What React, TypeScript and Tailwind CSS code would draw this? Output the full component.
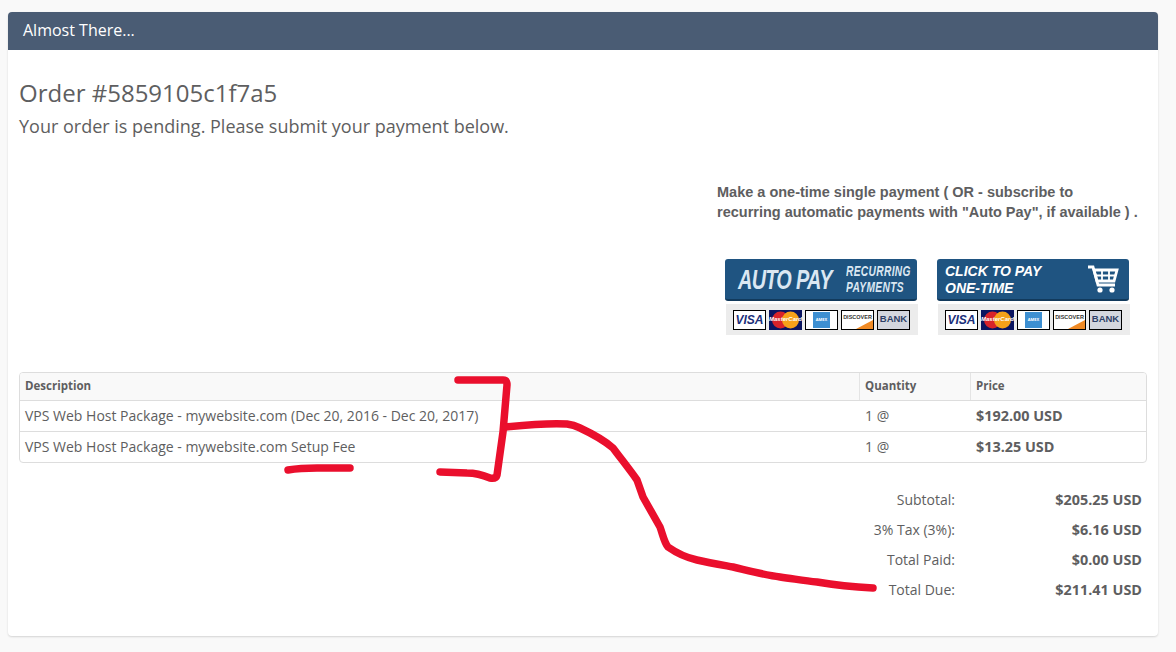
const Logos = () => (
  <div className="flex w-[192px] h-[31px] items-center pl-[7px] gap-[3px] bg-[#ececec]">
    <div className="w-[33px] h-[20px] bg-white border border-black flex items-center justify-center text-[12px] font-bold italic text-[#1a2f7a] font-['Liberation_Sans',sans-serif]">VISA</div>
    <div className="relative w-[33px] h-[20px] bg-[#0b1560] overflow-hidden flex items-center justify-center">
      <svg width="33" height="20" viewBox="0 0 33 20" className="absolute inset-0">
        <circle cx="11.5" cy="10" r="8.5" fill="#d8232a" />
        <circle cx="21.5" cy="10" r="8.5" fill="#f6a11a" />
      </svg>
      <span className="relative text-[6px] font-bold italic text-white font-['Liberation_Sans',sans-serif]">MasterCard</span>
    </div>
    <div className="w-[33px] h-[20px] bg-white border border-black flex items-center justify-center">
      <div className="w-[17px] h-[16px] bg-[#3d8fd1] flex items-center justify-center text-[4px] font-bold text-white">AMEX</div>
    </div>
    <div className="relative w-[33px] h-[20px] bg-white border border-black overflow-hidden flex items-start justify-center pt-[2px]">
      <span className="text-[5.5px] leading-[8px] font-bold text-[#333] font-['Liberation_Sans',sans-serif]">DISCOVER</span>
      <svg width="31" height="18" viewBox="0 0 31 18" className="absolute inset-0">
        <path d="M14 18 L31 9 L31 18 Z" fill="#f08a24" />
      </svg>
    </div>
    <div className="w-[33px] h-[20px] bg-[#d3d6de] border border-black flex items-center justify-center text-[9.5px] font-bold text-[#2c3e66] font-['Liberation_Sans',sans-serif]">BANK</div>
  </div>
);

const Cart = () => (
  <svg width="32" height="32" viewBox="0 0 32 32" fill="none" stroke="#fff" strokeWidth="2.8">
    <path d="M1 4 H6 L11 22 H28" />
    <path d="M7 7 H30 L27 18 H10 Z" />
    <path d="M8.5 12.5 H28.5 M15 7 V18 M22 7 V18" strokeWidth="1.8" />
    <circle cx="13" cy="27" r="2.6" fill="#fff" stroke="none" />
    <circle cx="25" cy="27" r="2.6" fill="#fff" stroke="none" />
  </svg>
);

const TotalRow = ({ label, value }: { label: string; value: string }) => (
  <div className="flex h-[30px] items-center justify-end leading-[20px]">
    <span className="w-[299px] text-right">{label}</span>
    <span className="w-[187px] text-right font-bold text-[14.4px]">{value}</span>
  </div>
);

export default function App() {
  return (
    <div className="relative min-h-[652px] bg-[#f9f9f9] pt-3 px-2 font-['Open_Sans',sans-serif] text-[#5e5e60] overflow-hidden">
      <div className="w-[1150px] h-[624px] bg-white rounded-[4px] shadow-[0_1px_2px_rgba(0,0,0,0.15)]">
        <div className="h-[38px] bg-[#4a5c74] rounded-t-[4px] pl-[15px] pb-[2px] flex items-center text-[16px] text-white">
          Almost There...
        </div>
        <div className="pl-[11px] pr-[11px]">
          <h1 className="mt-[27px] text-[24px] leading-[32px]">Order #5859105c1f7a5</h1>
          <p className="mt-[5px] text-[18px] leading-[24px]">Your order is pending. Please submit your payment below.</p>

          <div className="ml-[698px] mt-[44px] text-[14.5px] leading-[20px] font-bold font-['Liberation_Sans',sans-serif] whitespace-nowrap">
            Make a one-time single payment ( OR - subscribe to
            <br />
            recurring automatic payments with "Auto Pay", if available ) .
          </div>

          <div className="flex ml-[706px] mt-[37px] gap-5">
            <div className="w-[192px]">
              <div className="h-[42px] bg-[#1f5481] rounded-[3px] border-b-2 border-[#123a5c] flex items-center pl-[13px] text-white italic font-bold font-['Liberation_Sans',sans-serif]">
                <span className="pt-[1px] text-[28px] leading-none tracking-[-1px] scale-x-[0.71] origin-left w-[108px] whitespace-nowrap text-[#dbe7f2]">AUTO PAY</span>
                <span className="text-[15px] leading-[16px] tracking-[0.5px] scale-x-[0.68] origin-left whitespace-nowrap text-[#dbe7f2]">
                  RECURRING
                  <br />
                  PAYMENTS
                </span>
              </div>
              <div className="mt-[3px] ml-[1px]"><Logos /></div>
            </div>
            <div className="w-[192px]">
              <div className="h-[42px] bg-[#1f5481] rounded-[3px] border-b-2 border-[#123a5c] flex items-center justify-between pl-[8px] pr-[10px] text-white italic font-bold font-['Liberation_Sans',sans-serif]">
                <span className="pt-[1px] text-[14px] leading-[17px] whitespace-nowrap">
                  CLICK TO PAY
                  <br />
                  ONE-TIME
                </span>
                <Cart />
              </div>
              <div className="mt-[3px] ml-[1px]"><Logos /></div>
            </div>
          </div>

          <div className="mt-[37px] w-[1128px] border border-[#dddddd] rounded-[4px] text-[14px] overflow-hidden">
            <div className="flex h-[28px] bg-[#f9f9f9] border-b border-[#dddddd] text-[11.5px] font-bold items-stretch">
              <div className="w-[839px] pl-[5px] pb-[1px] flex items-center">Description</div>
              <div className="w-[111px] pl-[5px] pb-[1px] border-l border-[#e4e4e4] flex items-center">Quantity</div>
              <div className="flex-1 pl-[5px] pb-[1px] border-l border-[#e4e4e4] flex items-center">Price</div>
            </div>
            <div className="flex h-[31px] border-b border-[#dddddd] items-center leading-[20px]">
              <div className="w-[839px] pl-[5px]">VPS Web Host Package - mywebsite.com (Dec 20, 2016 - Dec 20, 2017)</div>
              <div className="w-[111px] pl-[6px]">1 @</div>
              <div className="flex-1 pl-[6px] font-bold text-[14.4px]">$192.00 USD</div>
            </div>
            <div className="flex h-[30px] items-center leading-[20px]">
              <div className="w-[839px] pl-[5px]">VPS Web Host Package - mywebsite.com Setup Fee</div>
              <div className="w-[111px] pl-[6px]">1 @</div>
              <div className="flex-1 pl-[6px] font-bold text-[14.4px]">$13.25 USD</div>
            </div>
          </div>

          <div className="mt-[22px] w-[1123px] text-[14px]">
            <TotalRow label="Subtotal:" value="$205.25 USD" />
            <TotalRow label="3% Tax (3%):" value="$6.16 USD" />
            <TotalRow label="Total Paid:" value="$0.00 USD" />
            <TotalRow label="Total Due:" value="$211.41 USD" />
          </div>
        </div>
      </div>

      <svg width="1176" height="652" viewBox="0 0 1176 652" fill="none" stroke="#ea0f2d" strokeWidth="7.5" strokeLinecap="round" strokeLinejoin="round" className="absolute inset-0 pointer-events-none">
        <path d="M458 380 L503 380 Q507 380 507 385 L503 432 L497 475 Q496 479 490 478 Q478 473 467 473 L440 472" />
        <path d="M288 470 Q300 468 317 468 L350 468" />
        <path d="M506 427 C525 425 550 423 567 424 C575 425 578 427 580 428 C595 435 605 441 613 448 C622 460 630 470 637 480 L643 497 L660 527 C663 535 664 542 668 547 C678 554 688 558 697 560 C710 563 722 565 733 567 C750 571 765 575 780 577 C795 579 805 581 817 582 C835 585 855 587 873 588" />
      </svg>
    </div>
  );
}
